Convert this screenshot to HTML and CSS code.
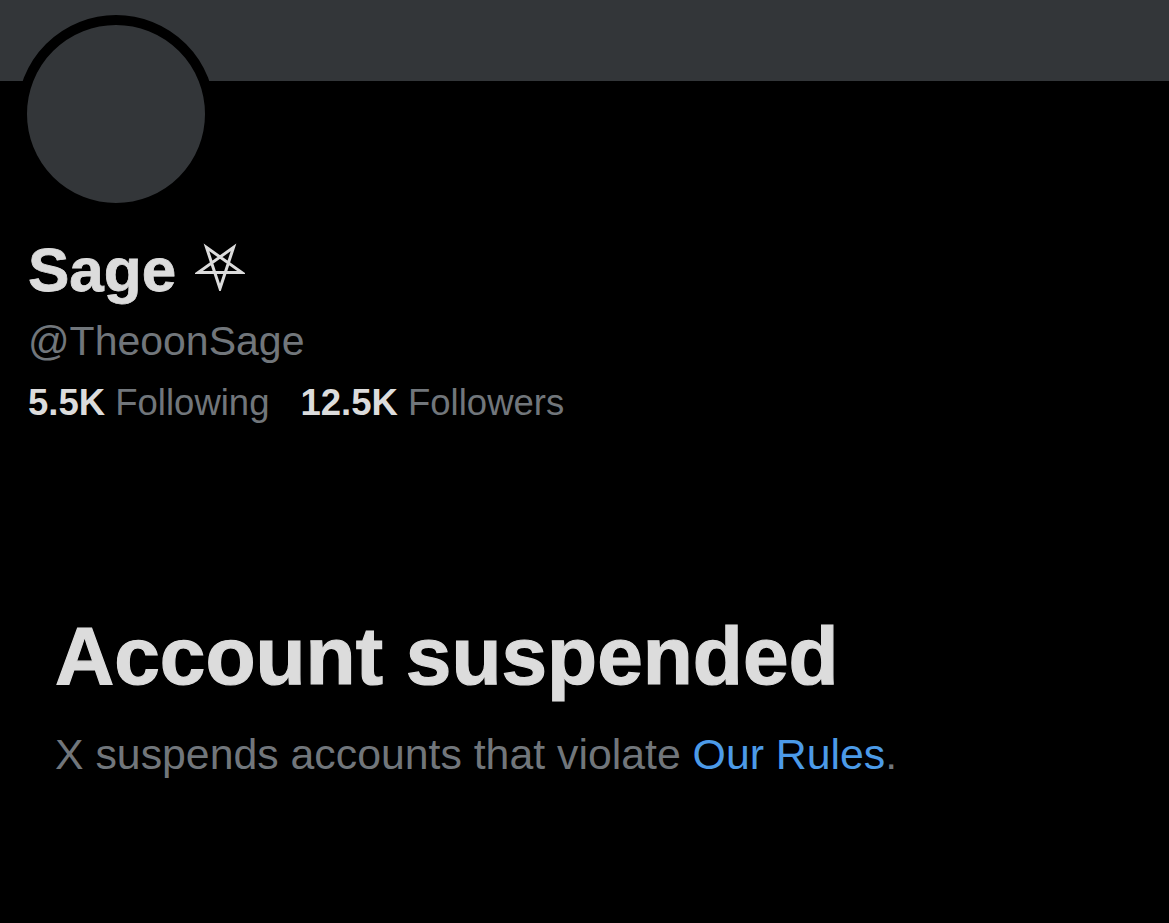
FILE: index.html
```html
<!DOCTYPE html>
<html>
<head>
<meta charset="utf-8">
<link rel="stylesheet" href="styles.css">
</head>
<body>
<div class="banner"></div>
<div class="profile">
  <div class="avatar"></div>
  <div class="name-row">
    <span class="name">Sage</span>
    <svg class="star" width="50" height="48" viewBox="0 0 50 48">
      <polygon points="25,45.5 38.5,4.4 3.1,29.6 46.9,29.6 11.5,4.4" fill="none" stroke="#dcdcdc" stroke-width="3" stroke-linejoin="miter"/>
    </svg>
  </div>
  <div class="handle">@TheoonSage</div>
  <div class="stats">
    <span class="stat"><b>5.5K</b> <span class="label">Following</span></span>
    <span class="stat"><b>12.5K</b> <span class="label">Followers</span></span>
  </div>
</div>
<div class="suspended">
  <h1 class="title">Account suspended</h1>
  <p class="desc">X suspends accounts that violate <span class="link">Our Rules</span>.</p>
</div>
</body>
</html>
```
FILE: styles.css
```css
html, body {
  margin: 0;
  padding: 0;
  background: #000;
  width: 1169px;
  height: 923px;
  overflow: hidden;
  font-family: "Liberation Sans", Arial, sans-serif;
}
.banner {
  height: 81px;
  background: #333639;
}
.profile {
  padding-left: 28px;
}
.avatar {
  width: 178px;
  height: 178px;
  border-radius: 50%;
  background: #333639;
  border: 10px solid #000;
  margin-top: -66px;
  margin-left: -11px;
}
.name-row {
  display: flex;
  align-items: flex-start;
  margin-top: 22px;
  height: 70px;
}
.name {
  font-size: 62px;
  font-weight: bold;
  color: #dcdcdc;
  line-height: 70px;
  -webkit-text-stroke: 0.8px #dcdcdc;
}
.star {
  margin-left: 19px;
  margin-top: 8px;
}
.handle {
  font-size: 41px;
  color: #71767b;
  line-height: 48px;
  margin-top: 12px;
}
.stats {
  display: flex;
  gap: 31px;
  font-size: 36.5px;
  line-height: 44px;
  margin-top: 16px;
}
.stats b {
  color: #dcdcdc;
}
.label {
  color: #71767b;
}
.suspended {
  padding-left: 55px;
  margin-top: 186px;
}
.title {
  margin: 0;
  font-size: 82px;
  font-weight: bold;
  color: #dcdcdc;
  line-height: 90px;
  -webkit-text-stroke: 1.2px #dcdcdc;
}
.desc {
  margin: 28px 0 0;
  font-size: 42.8px;
  line-height: 50px;
  color: #71767b;
}
.link {
  color: #4c9be8;
}
```
